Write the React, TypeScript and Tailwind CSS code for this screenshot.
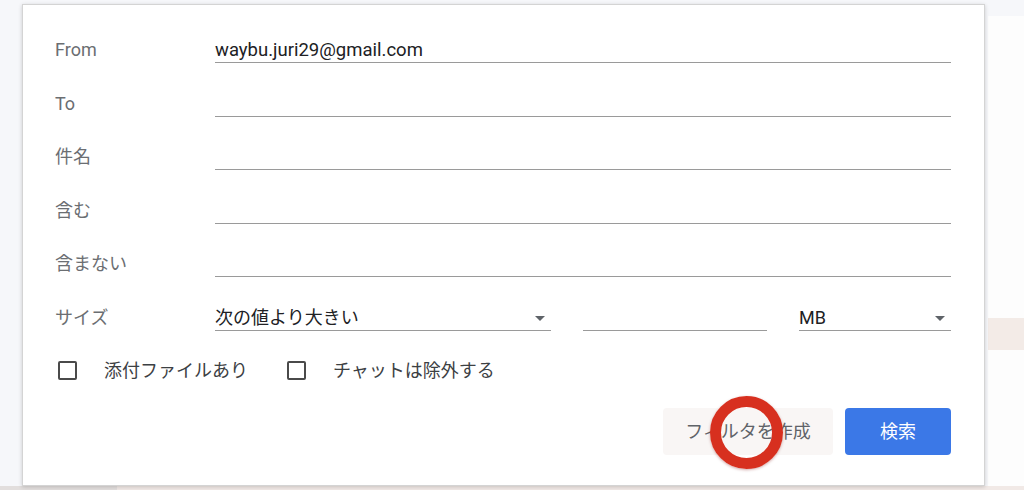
import type { ReactNode } from "react";

const jp = "font-['Roboto','Noto_Sans_CJK_JP',sans-serif]";

function Arrow() {
  return (
    <svg width="10" height="5" viewBox="0 0 10 5" className="shrink-0">
      <path d="M0 0h10L5 5z" fill="#5f6368" />
    </svg>
  );
}

function Row({ label, h, children }: { label: string; h: string; children: ReactNode }) {
  return (
    <div className={`flex items-end ${h}`}>
      <div className="w-[160px] shrink-0 text-[18px] leading-[24px] text-[#6b6e72] pb-px">{label}</div>
      {children}
    </div>
  );
}

function Field({ value }: { value?: string }) {
  return (
    <div className="flex-1 h-[25px] border-b border-[#9a9a9a] text-[18.5px] leading-[24px] text-[#202124]">
      {value}
    </div>
  );
}

function Checkbox({ label }: { label: string }) {
  return (
    <div className="flex items-center">
      <div className="w-[19px] h-[19px] border-2 border-[#4a4a4a] rounded-[2px]" />
      <span className="ml-[27px] text-[18px] text-[#3c4043]">{label}</span>
    </div>
  );
}

export default function App() {
  return (
    <div className={`w-[1024px] h-[490px] overflow-hidden bg-[#f6f7fa] ${jp} flex flex-col`}>
      <div className="flex h-[486px]">
        <div className="w-[22px] shrink-0" />
        <div className="relative mt-[4px] w-[963px] h-[482px] bg-white border border-[#d4d4d4] shadow-[0_1px_4px_rgba(0,0,0,0.18)] pl-[32px] pr-[33px] pt-[4px]">
          <Row label="From" h="h-[54px]">
            <Field value="waybu.juri29@gmail.com" />
          </Row>
          <Row label="To" h="h-[54px]">
            <Field />
          </Row>
          <Row label="件名" h="h-[53px]">
            <Field />
          </Row>
          <Row label="含む" h="h-[54px]">
            <Field />
          </Row>
          <Row label="含まない" h="h-[53px]">
            <Field />
          </Row>
          <Row label="サイズ" h="h-[54px]">
            <div className="w-[336px] h-[25px] border-b border-[#9a9a9a] flex items-center justify-between pr-[6px] text-[18px] leading-[24px] text-[#202124]">
              <span>次の値より大きい</span>
              <Arrow />
            </div>
            <div className="ml-[32px] w-[184px] h-[25px] border-b border-[#9a9a9a]" />
            <div className="ml-[32px] flex-1 h-[25px] border-b border-[#9a9a9a] flex items-center justify-between pr-[6px] text-[18px] leading-[24px] text-[#202124]">
              <span>MB</span>
              <Arrow />
            </div>
          </Row>
          <div className="flex items-center gap-[39px] mt-[26px] pl-[3px]">
            <Checkbox label="添付ファイルあり" />
            <Checkbox label="チャットは除外する" />
          </div>
          <div className="flex justify-end gap-[12px] mt-[24px]">
            <button className="w-[170px] h-[47px] rounded-[4px] bg-[#f9f6f5] text-[18px] text-[#5f6368]">
              フィルタを作成
            </button>
            <button className="w-[106px] h-[47px] rounded-[4px] bg-[#3b78e7] text-[18px] text-white">
              検索
            </button>
          </div>
          <div className="absolute left-[687px] top-[391px] w-[73px] h-[73px] rounded-full border-[11px] border-[#d7301f] shadow-[0_1px_3px_rgba(120,0,0,0.35)]" />
        </div>
        <div className="flex-1 flex flex-col ml-[3px]">
          <div className="h-[16px] bg-[#f6f7fa]" />
          <div className="h-[302px] bg-[#fdfdfd]" />
          <div className="h-[32px] bg-[#f3ebe7]" />
          <div className="flex-1 bg-[#fdfdfd]" />
        </div>
      </div>
      <div className="flex h-[4px]">
        <div className="w-[117px] bg-[#e2dedd]" />
        <div className="flex-1 bg-[#f1e9e6]" />
      </div>
    </div>
  );
}
